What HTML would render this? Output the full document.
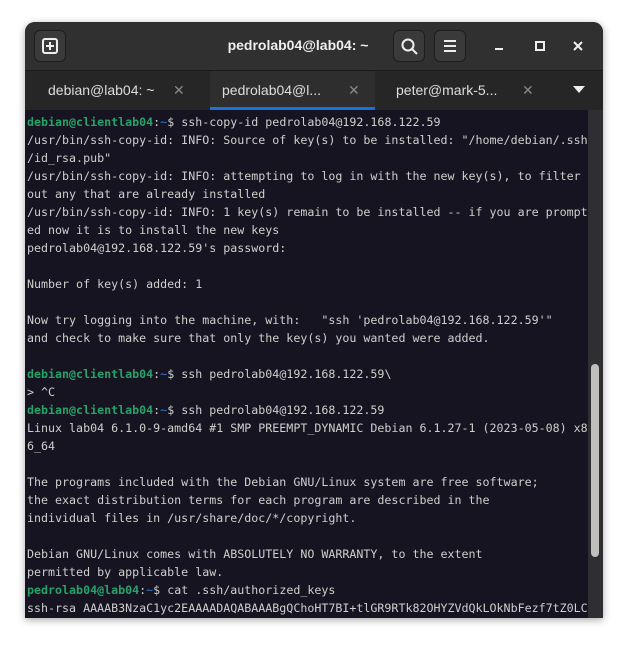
<!DOCTYPE html>
<html><head><style>
body{margin:0;width:628px;height:646px;background:#fff;position:relative;overflow:hidden;font-family:"Liberation Sans",sans-serif}
.win{position:absolute;left:25px;top:22px;width:578px;height:596px;border-radius:10px 10px 0 0;overflow:hidden;background:#171421;box-shadow:0 2px 8px rgba(0,0,0,.35)}
.hdr{position:absolute;left:0;top:0;width:578px;height:48px;background:#303030}
.btn{position:absolute;top:8px;width:32px;height:32px;border-radius:6px;background:#3a3a3a;border:1px solid #1e1e1e;box-sizing:border-box}
.title{position:absolute;left:0;width:546px;top:15px;text-align:center;color:#eee;font-weight:bold;font-size:14px}
.tabs{position:absolute;top:48px;left:0;width:578px;height:40px;background:#262626;border-top:1px solid #1a1a1a;box-sizing:border-box}
.tab{position:absolute;top:0;height:39px;line-height:38px;color:#ddd;font-size:14px}
.x{position:absolute;top:0;color:#888;font-size:14px}
.term{position:absolute;left:2px;top:91px;width:560px;font-family:"DejaVu Sans Mono",monospace;font-size:11.65px;line-height:18px;color:#d0cfcc;white-space:pre}
.g{color:#26a269;font-weight:bold}.b{color:#2a7bde}
.sb{position:absolute;left:563px;top:88px;width:15px;height:508px;background:#2e2e33}
.th{position:absolute;left:3px;top:254px;width:8px;height:193px;border-radius:4px;background:#c0bfbc}
</style></head><body>
<div class="win">
<div class="hdr">
<div class="btn" style="left:9px"><svg width="30" height="30" viewBox="0 0 30 30"><rect x="8" y="8" width="14" height="14" rx="2" fill="none" stroke="#eee" stroke-width="2"/><path d="M15 11v8M11 15h8" stroke="#eee" stroke-width="2"/></svg></div>
<div class="title">pedrolab04@lab04: ~</div>
<div class="btn" style="left:368px"><svg width="30" height="30" viewBox="0 0 30 30"><circle cx="14" cy="14" r="5.5" fill="none" stroke="#eee" stroke-width="2"/><path d="M18 18l5 5" stroke="#eee" stroke-width="2"/></svg></div>
<div class="btn" style="left:409px"><svg width="30" height="30" viewBox="0 0 30 30"><path d="M9 10h12M9 15h12M9 20h12" stroke="#eee" stroke-width="2"/></svg></div>
<div style="position:absolute;left:470px;top:26px;width:8px;height:2px;background:#eee"></div>
<div style="position:absolute;left:510px;top:19px;width:6px;height:6px;border:2px solid #eee"></div>
<svg style="position:absolute;left:547px;top:18px" width="12" height="12" viewBox="0 0 12 12"><path d="M2 2l8 8M10 2l-8 8" stroke="#eee" stroke-width="2"/></svg>
</div>
<div class="tabs">
<div class="tab" style="left:23px">debian@lab04: ~</div><div class="x" style="left:148px;line-height:38px">✕</div>
<div style="position:absolute;left:185px;top:0;width:165px;height:39px;background:#2e2e2e"></div>
<div class="tab" style="left:197px">pedrolab04@l...</div><div class="x" style="left:323px;line-height:38px">✕</div>
<div style="position:absolute;left:185px;top:36px;width:165px;height:3px;background:#1c71d8"></div>
<div class="tab" style="left:371px">peter@mark-5...</div><div class="x" style="left:497px;line-height:38px">✕</div>
<svg style="position:absolute;left:548px;top:15px" width="12" height="8"><path d="M0 0h12L6 7z" fill="#eee"/></svg>
</div>
<div class="term"><span class="g">debian@clientlab04</span>:<span class="b">~</span>$ ssh-copy-id pedrolab04@192.168.122.59
/usr/bin/ssh-copy-id: INFO: Source of key(s) to be installed: "/home/debian/.ssh
/id_rsa.pub"
/usr/bin/ssh-copy-id: INFO: attempting to log in with the new key(s), to filter
out any that are already installed
/usr/bin/ssh-copy-id: INFO: 1 key(s) remain to be installed -- if you are prompt
ed now it is to install the new keys
pedrolab04@192.168.122.59's password: 

Number of key(s) added: 1

Now try logging into the machine, with:   "ssh 'pedrolab04@192.168.122.59'"
and check to make sure that only the key(s) you wanted were added.

<span class="g">debian@clientlab04</span>:<span class="b">~</span>$ ssh pedrolab04@192.168.122.59\
&gt; ^C
<span class="g">debian@clientlab04</span>:<span class="b">~</span>$ ssh pedrolab04@192.168.122.59
Linux lab04 6.1.0-9-amd64 #1 SMP PREEMPT_DYNAMIC Debian 6.1.27-1 (2023-05-08) x8
6_64

The programs included with the Debian GNU/Linux system are free software;
the exact distribution terms for each program are described in the
individual files in /usr/share/doc/*/copyright.

Debian GNU/Linux comes with ABSOLUTELY NO WARRANTY, to the extent
permitted by applicable law.
<span class="g">pedrolab04@lab04</span>:<span class="b">~</span>$ cat .ssh/authorized_keys
ssh-rsa AAAAB3NzaC1yc2EAAAADAQABAAABgQChoHT7BI+tlGR9RTk82OHYZVdQkLOkNbFezf7tZ0LC</div>
<div class="sb"><div class="th"></div></div>
</div>
</body></html>
